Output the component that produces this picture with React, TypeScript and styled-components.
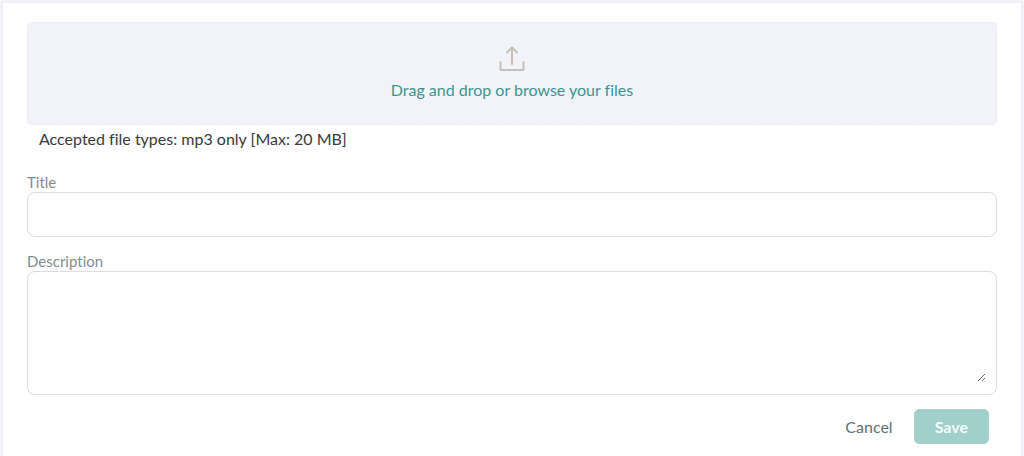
import React from "react";
import styled, { createGlobalStyle } from "styled-components";

const GlobalStyle = createGlobalStyle`
  *, *::before, *::after { box-sizing: border-box; }
  body {
    margin: 0;
    background: #f3f3f9;
    color: #3a3a3c;
    font-family: Lato, "Liberation Sans", sans-serif;
    font-size: 16px;
    line-height: 20px;
    font-variant-ligatures: none;
  }
  #root { display: flex; min-height: 100vh; }
`;

const Card = styled.form`
  flex: 1;
  min-width: 0;
  margin: 3px 3px 0;
  padding: 19px 24px 12px;
  background: #fff;
  box-shadow: 0 0 0 1px #eeeef5;
`;

const DropZone = styled.label`
  display: flex;
  flex-direction: column;
  align-items: center;
  position: relative;
  padding: 22px 16px 24px;
  border: 1px dashed #ebecf1;
  border-radius: 5px;
  background: #f2f3f9;
  color: #3a9690;
  cursor: pointer;
`;

const FileInput = styled.input`
  position: absolute;
  inset: 0;
  width: 100%;
  height: 100%;
  opacity: 0;
  cursor: pointer;
`;

const UploadIcon = styled.svg`
  display: block;
  width: 28px;
  height: 28px;
  margin-bottom: 7px;
  fill: none;
  stroke: #c6bfb6;
  stroke-width: 2;
  stroke-linecap: round;
  stroke-linejoin: round;
`;

const Hint = styled.p`
  margin: 4px 12px 23px;
`;

const Field = styled.div`
  display: flex;
  flex-direction: column;
  margin-bottom: 14px;
`;

const FieldLabel = styled.label`
  color: #858c90;
  font-size: 15px;
`;

const TextInput = styled.input`
  width: 100%;
  height: 45px;
  padding: 0 12px;
  border: 1px solid #dcdce6;
  border-radius: 8px;
  background: #fff;
  color: inherit;
  font: inherit;
`;

const AreaFrame = styled.div`
  padding: 10px 10px 12px;
  border: 1px solid #dcdce6;
  border-radius: 8px;
`;

const TextArea = styled.textarea`
  display: block;
  width: 100%;
  height: 100px;
  padding: 0;
  border: 0;
  outline: 0;
  background: transparent;
  color: inherit;
  font: inherit;
  resize: vertical;
`;

const Actions = styled.div`
  display: flex;
  justify-content: flex-end;
  gap: 8px;
  padding-right: 8px;
`;

const Button = styled.button<{ $primary?: boolean }>`
  height: 35px;
  padding: 0 ${(p) => (p.$primary ? 20 : 12)}px;
  border: 1px solid ${(p) => (p.$primary ? "#a9d2cd" : "transparent")};
  border-radius: 5px;
  background: ${(p) => (p.$primary ? "#a1cfca" : "transparent")};
  color: ${(p) => (p.$primary ? "#f5fafa" : "#5b717d")};
  font: inherit;
  font-weight: ${(p) => (p.$primary ? 700 : 400)};
  cursor: pointer;
`;

export default function App() {
  return (
    <>
      <GlobalStyle />
      <Card onSubmit={(e) => e.preventDefault()}>
        <DropZone>
          <UploadIcon viewBox="0 0 28 28" aria-hidden="true">
            <path d="M14 19V2.5M9 7.500l5-5 5 5" />
            <path d="M2.500 17v7a1 1 0 0 0 1 1h21a1 1 0 0 0 1-1v-7" />
          </UploadIcon>
          Drag and drop or browse your files
          <FileInput type="file" accept=".mp3" />
        </DropZone>
        <Hint>Accepted file types: mp3 only [Max: 20 MB]</Hint>
        <Field>
          <FieldLabel htmlFor="title">Title</FieldLabel>
          <TextInput id="title" type="text" />
        </Field>
        <Field>
          <FieldLabel htmlFor="description">Description</FieldLabel>
          <AreaFrame>
            <TextArea id="description" />
          </AreaFrame>
        </Field>
        <Actions>
          <Button type="button">Cancel</Button>
          <Button type="submit" $primary>Save</Button>
        </Actions>
      </Card>
    </>
  );
}
